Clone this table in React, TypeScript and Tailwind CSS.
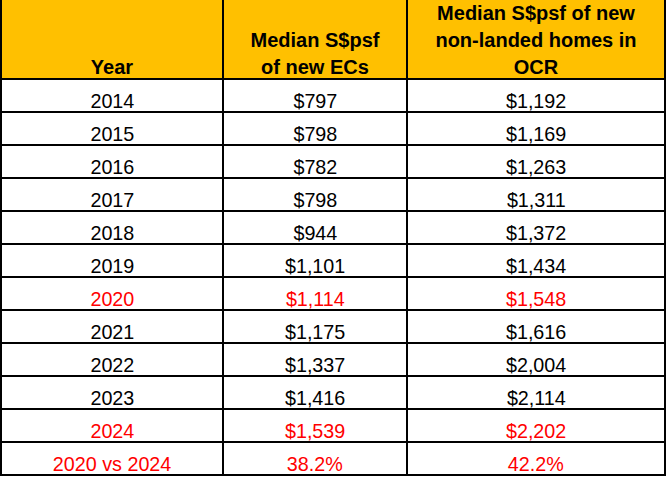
const ROWS: { year: string; ec: string; ocr: string; red?: boolean }[] = [
  { year: "2014", ec: "$797", ocr: "$1,192" },
  { year: "2015", ec: "$798", ocr: "$1,169" },
  { year: "2016", ec: "$782", ocr: "$1,263" },
  { year: "2017", ec: "$798", ocr: "$1,311" },
  { year: "2018", ec: "$944", ocr: "$1,372" },
  { year: "2019", ec: "$1,101", ocr: "$1,434" },
  { year: "2020", ec: "$1,114", ocr: "$1,548", red: true },
  { year: "2021", ec: "$1,175", ocr: "$1,616" },
  { year: "2022", ec: "$1,337", ocr: "$2,004" },
  { year: "2023", ec: "$1,416", ocr: "$2,114" },
  { year: "2024", ec: "$1,539", ocr: "$2,202", red: true },
  { year: "2020 vs 2024", ec: "38.2%", ocr: "42.2%", red: true },
];

function Cell({ children }: { children: string }) {
  return <span className="inline-block origin-bottom scale-x-[0.94] whitespace-nowrap">{children}</span>;
}

export default function App() {
  return (
    <div className="min-h-[477px] w-[667px] bg-white font-['Liberation_Sans',Arial,sans-serif]">
      <div className="w-[666px] border-x-2 border-b-2 border-black">
        {/* header */}
        <div className="flex h-[78px] bg-[#FFC000] text-[20px] font-bold text-black">
          <div className="flex w-[220px] items-end justify-center">
            <span className="-mb-[3px] leading-[27px]">Year</span>
          </div>
          <div className="flex w-[184px] items-end justify-center border-l-2 border-black">
            <span className="-mb-[3px] text-center leading-[27px]">
              Median S$psf
              <br />
              of new ECs
            </span>
          </div>
          <div className="flex flex-1 items-end justify-center border-l-2 border-black">
            <span className="-mb-[3px] text-center leading-[27px]">
              Median S$psf of new
              <br />
              non-landed homes in
              <br />
              OCR
            </span>
          </div>
        </div>

        {ROWS.map((r) => (
          <div
            key={r.year}
            className={`flex h-[33px] border-t-2 border-black text-[21px] leading-[21px] ${r.red ? "text-[#FF0000]" : "text-black"}`}
          >
            <div className="flex w-[220px] items-end justify-center"><Cell>{r.year}</Cell></div>
            <div className="flex w-[184px] items-end justify-center border-l-2 border-black"><Cell>{r.ec}</Cell></div>
            <div className="flex flex-1 items-end justify-center border-l-2 border-black"><Cell>{r.ocr}</Cell></div>
          </div>
        ))}
      </div>
    </div>
  );
}
